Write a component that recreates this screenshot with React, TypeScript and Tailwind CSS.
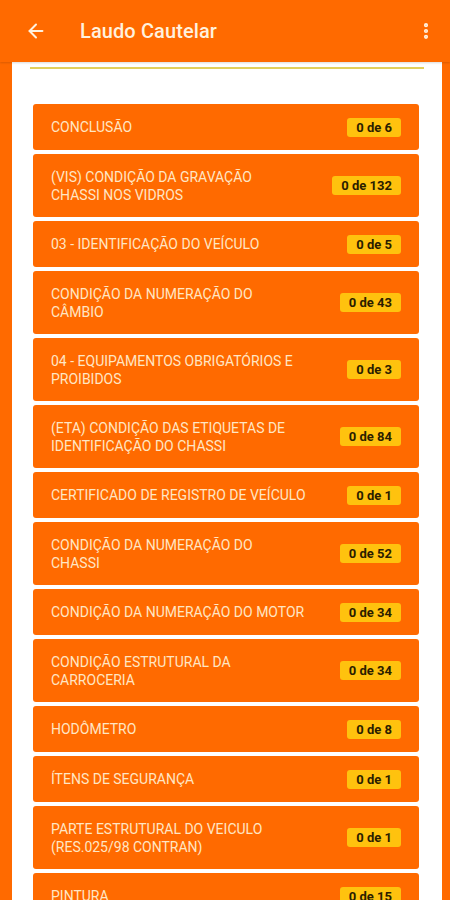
import { ArrowLeft, EllipsisVertical } from "lucide-react";

type Item = {
    lines: string[],
    total: number
}

const itens: Item[] = [
    { lines: ["CONCLUSÃO"], total: 6 },
    { lines: ["(VIS) CONDIÇÃO DA GRAVAÇÃO", "CHASSI NOS VIDROS"], total: 132 },
    { lines: ["03 - IDENTIFICAÇÃO DO VEÍCULO"], total: 5 },
    { lines: ["CONDIÇÃO DA NUMERAÇÃO DO", "CÂMBIO"], total: 43 },
    { lines: ["04 - EQUIPAMENTOS OBRIGATÓRIOS E", "PROIBIDOS"], total: 3 },
    { lines: ["(ETA) CONDIÇÃO DAS ETIQUETAS DE", "IDENTIFICAÇÃO DO CHASSI"], total: 84 },
    { lines: ["CERTIFICADO DE REGISTRO DE VEÍCULO"], total: 1 },
    { lines: ["CONDIÇÃO DA NUMERAÇÃO DO", "CHASSI"], total: 52 },
    { lines: ["CONDIÇÃO DA NUMERAÇÃO DO MOTOR"], total: 34 },
    { lines: ["CONDIÇÃO ESTRUTURAL DA", "CARROCERIA"], total: 34 },
    { lines: ["HODÔMETRO"], total: 8 },
    { lines: ["ÍTENS DE SEGURANÇA"], total: 1 },
    { lines: ["PARTE ESTRUTURAL DO VEICULO", "(RES.025/98 CONTRAN)"], total: 1 },
    { lines: ["PINTURA"], total: 15 },
]

function ItemLaudo({ item }: { item: Item }) {
    const duasLinhas = item.lines.length > 1
    return (
        <div className={`flex items-center justify-between bg-[#ff6a00] rounded-[3px] pl-[18px] pr-[18px] shrink-0 ${duasLinhas ? "h-[63px]" : "h-[46px]"}`}>
            <div className="text-[14px] leading-[18px] text-[#ffe6c4]">
                {item.lines.map((l) => (
                    <div key={l} className="whitespace-nowrap">{l}</div>
                ))}
            </div>
            <span className="bg-[#ffc20e] text-[#2b1d00] text-[13px] font-bold leading-[19px] px-[9px] rounded-[3px]">
                0 de {item.total}
            </span>
        </div>
    )
}

export default function App() {
    return (
        <div className="w-[450px] h-[900px] overflow-hidden flex flex-col bg-[#ff6a00] font-['Roboto',sans-serif]">
            {/* Toolbar */}
            <div className="h-[62px] shrink-0 flex items-center pl-[25px] pr-[14px] text-[#fff1de] shadow-[0_1px_2px_rgba(0,0,0,0.15)] z-10">
                <ArrowLeft size={22} strokeWidth={2.2} />
                <h1 className="ml-[33px] text-[20px] font-medium tracking-[0.1px]">Laudo Cautelar</h1>
                <EllipsisVertical size={20} strokeWidth={3} className="ml-auto" />
            </div>

            {/* Conteudo */}
            <div className="flex-1 flex pl-[12px] pr-[8px] min-h-0">
                <div className="flex-1 bg-white flex flex-col">
                    <div className="mt-[5px] mx-[18px] h-[2px] shrink-0 bg-[#e2cf5c]" />
                    <div className="flex flex-col gap-[4px] mt-[35px] ml-[21px] mr-[23px]">
                        {itens.map((it, i) => (
                            <ItemLaudo key={i} item={it} />
                        ))}
                    </div>
                </div>
            </div>
        </div>
    )
}
